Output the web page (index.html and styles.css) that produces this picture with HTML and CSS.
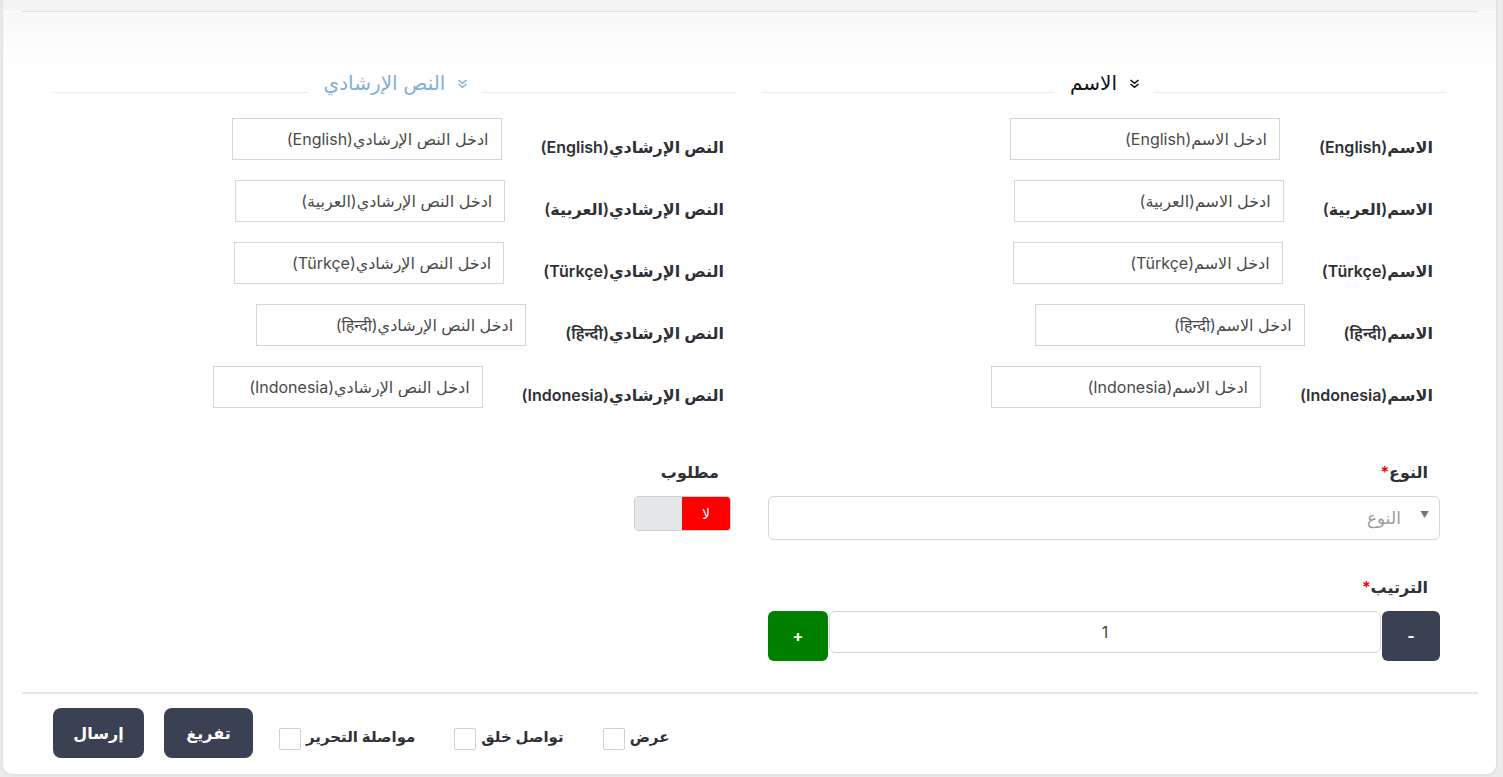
FILE: index.html
```html
<!DOCTYPE html>
<html lang="ar" dir="rtl">
<head>
<meta charset="utf-8">
<title>Form</title>
<link rel="stylesheet" href="styles.css">
</head>
<body>
<div class="page">
  <div class="card">
    <div class="card-top"></div>
    <div class="top-line"></div>
    <div class="card-body">
      <div class="cols">
        <section class="col">
          <div class="sec-head">
            <span class="line"></span>
            <span class="sec-title">
              <svg class="chev" width="11" height="10" viewBox="0 0 11 10"><path d="M1.5 1l4 3.3 4-3.3M1.5 5l4 3.3 4-3.3" fill="none" stroke="currentColor" stroke-width="1.6"/></svg>
              <span>الاسم</span>
            </span>
            <span class="line"></span>
          </div>
          <div class="field"><label class="flabel">الاسم(English)</label><input class="finput" type="text" placeholder="ادخل الاسم(English)"></div>
          <div class="field"><label class="flabel">الاسم(العربية)</label><input class="finput" type="text" placeholder="ادخل الاسم(العربية)"></div>
          <div class="field"><label class="flabel">الاسم(Türkçe)</label><input class="finput" type="text" placeholder="ادخل الاسم(Türkçe)"></div>
          <div class="field"><label class="flabel">الاسم(हिन्दी)</label><input class="finput" type="text" placeholder="ادخل الاسم(हिन्दी)"></div>
          <div class="field"><label class="flabel">الاسم(Indonesia)</label><input class="finput" type="text" placeholder="ادخل الاسم(Indonesia)"></div>
        </section>
        <section class="col">
          <div class="sec-head">
            <span class="line"></span>
            <span class="sec-title sec-title-blue">
              <svg class="chev" width="11" height="10" viewBox="0 0 11 10"><path d="M1.5 1l4 3.3 4-3.3M1.5 5l4 3.3 4-3.3" fill="none" stroke="currentColor" stroke-width="1.6"/></svg>
              <span>النص الإرشادي</span>
            </span>
            <span class="line"></span>
          </div>
          <div class="field"><label class="flabel">النص الإرشادي(English)</label><input class="finput" type="text" placeholder="ادخل النص الإرشادي(English)"></div>
          <div class="field"><label class="flabel">النص الإرشادي(العربية)</label><input class="finput" type="text" placeholder="ادخل النص الإرشادي(العربية)"></div>
          <div class="field"><label class="flabel">النص الإرشادي(Türkçe)</label><input class="finput" type="text" placeholder="ادخل النص الإرشادي(Türkçe)"></div>
          <div class="field"><label class="flabel">النص الإرشادي(हिन्दी)</label><input class="finput" type="text" placeholder="ادخل النص الإرشادي(हिन्दी)"></div>
          <div class="field"><label class="flabel">النص الإرشادي(Indonesia)</label><input class="finput" type="text" placeholder="ادخل النص الإرشادي(Indonesia)"></div>
        </section>
      </div>

      <div class="cols cols2">
        <div class="grp">
          <div class="glabel">النوع<span class="req">*</span></div>
          <div class="select"><span class="select-ph">النوع</span><span class="arrow">&#9660;</span></div>
          <div class="glabel glabel-order">الترتيب<span class="req">*</span></div>
          <div class="stepper">
            <button class="step step-minus" type="button">-</button>
            <input class="step-input" type="text" value="1">
            <button class="step step-plus" type="button">+</button>
          </div>
        </div>
        <div class="grp">
          <div class="glabel">مطلوب</div>
          <div class="toggle"><span class="toggle-no">لا</span><span class="toggle-off"></span></div>
        </div>
      </div>
    </div>
    <div class="sep"></div>
    <div class="footer">
      <label class="chk"><span class="chk-text">عرض</span><span class="chk-box"></span></label>
      <label class="chk"><span class="chk-text">تواصل خلق</span><span class="chk-box"></span></label>
      <label class="chk chk-last"><span class="chk-text">مواصلة التحرير</span><span class="chk-box"></span></label>
      <button class="btn btn-clear" type="button">تفريغ</button>
      <button class="btn btn-send" type="button">إرسال</button>
    </div>
  </div>
</div>
</body>
</html>
```

FILE: styles.css
```css
* { box-sizing: border-box; }

html, body {
  margin: 0;
  padding: 0;
  background: #ebebed;
  font-family: Inter, "DejaVu Sans", "Noto Sans", sans-serif;
  color: #333;
}

.page {
  padding: 0 6px 3px 2px;
  height: 777px;
  overflow: hidden;
}

.card {
  background: #fff;
  border: 1px solid #e1e1e3;
  border-top: none;
  border-radius: 0 0 10px 10px;
  box-shadow: 0 1px 3px rgba(0,0,0,0.04);
}

.card-top {
  height: 11px;
  background: #f4f4f5;
}

.top-line {
  height: 1px;
  background: #dedfe1;
  margin: 0 18px 0 19px;
}

.card-body {
  padding: 58px 50px 31px;
  background: linear-gradient(#f8f8f9 0, #ffffff 60px);
}

.cols {
  display: grid;
  grid-template-columns: 1fr 1fr;
  column-gap: 25px;
}

.sec-head {
  display: flex;
  align-items: flex-end;
  height: 26px;
}

.line {
  flex: 1;
  height: 1px;
  background: #e8eaee;
  margin-bottom: 3px;
}

.sec-title {
  display: flex;
  align-items: center;
  gap: 12px;
  padding: 0 14px 0 16px;
  font-size: 20px;
  line-height: 26px;
  color: #111;
}

.sec-title-blue {
  color: #7fb1d6;
}

.chev {
  display: block;
  margin-top: 1px;
}

.field {
  display: flex;
  align-items: flex-start;
  padding-right: 13px;
  margin-top: 20px;
}

.sec-head + .field {
  margin-top: 22px;
}

.flabel {
  padding-top: 17px;
  line-height: 24px;
  font-size: 16px;
  font-weight: 600;
  color: #2f3136;
  margin-left: 39px;
  white-space: nowrap;
}

.finput {
  width: 270px;
  height: 42px;
  border: 1px solid #d2d6df;
  border-radius: 0;
  padding: 0 12px 1px;
  font-family: inherit;
  font-size: 16px;
  color: #444;
  background: #fff;
  outline: none;
}

.finput::placeholder {
  color: #4a4a4a;
  opacity: 1;
}

.cols2 {
  margin-top: 52px;
}

.grp {
  padding: 0 6px;
}

.glabel {
  padding-right: 12px;
  font-size: 16px;
  line-height: 24px;
  font-weight: 600;
  color: #2f3136;
  margin-bottom: 12px;
}

.glabel-order {
  margin-top: 35px;
}

.req {
  color: #e00;
}

.select {
  height: 44px;
  border: 1px solid #d3d6dd;
  border-radius: 6px;
  display: flex;
  align-items: center;
  padding: 0 10px 0 0;
  background: #fff;
}

.select-ph {
  order: 2;
  font-size: 17px;
  color: #9a9a9a;
  margin-right: 19px;
}

.arrow {
  order: 1;
  font-size: 9px;
  color: #777;
  margin-top: -8px;
}

.stepper {
  display: flex;
  align-items: flex-start;
  gap: 1px;
}

.step {
  height: 50px;
  border: none;
  border-radius: 6px;
  color: #fff;
  font-family: inherit;
  font-size: 16px;
  font-weight: 700;
  padding: 0;
}

.step-minus {
  width: 58px;
  background: #3a4152;
}

.step-plus {
  width: 60px;
  background: #008000;
}

.step-input {
  flex: 1;
  height: 42px;
  border: 1px solid #d3d6dd;
  border-radius: 6px;
  text-align: center;
  font-family: inherit;
  font-size: 16px;
  color: #444;
  outline: none;
  padding: 0;
}

.toggle {
  display: flex;
  width: 97px;
  height: 35px;
  border: 1px solid #cfcfd3;
  border-radius: 4px;
  overflow: hidden;
}

.toggle-no {
  width: 48px;
  background: #ff0000;
  color: #fff;
  font-size: 14px;
  display: flex;
  align-items: center;
  justify-content: center;
}

.toggle-off {
  flex: 1;
  background: #e6e7e9;
}

.sep {
  height: 2px;
  background: #e6e6e7;
  margin: 0 18px 0 19px;
}

.footer {
  display: flex;
  justify-content: flex-end;
  align-items: flex-start;
  padding: 14px 50px 16px;
}

.chk {
  display: flex;
  align-items: flex-start;
  gap: 5px;
  margin-top: 20px;
  margin-left: 39px;
  font-size: 15px;
  font-weight: 600;
  color: #2f3136;
}

.chk-text {
  line-height: 22px;
  margin-top: -2px;
}

.chk-last {
  margin-left: 26px;
}

.chk-box {
  width: 22px;
  height: 22px;
  border: 1px solid #cfd0d4;
  border-radius: 2px;
  background: #fff;
}

.btn {
  height: 50px;
  padding: 0;
  border: none;
  border-radius: 8px;
  background: #3a4152;
  color: #fff;
  font-family: inherit;
  font-size: 16px;
  font-weight: 700;
}

.btn-clear {
  width: 89px;
  margin-left: 20px;
}

.btn-send {
  width: 91px;
}
```
